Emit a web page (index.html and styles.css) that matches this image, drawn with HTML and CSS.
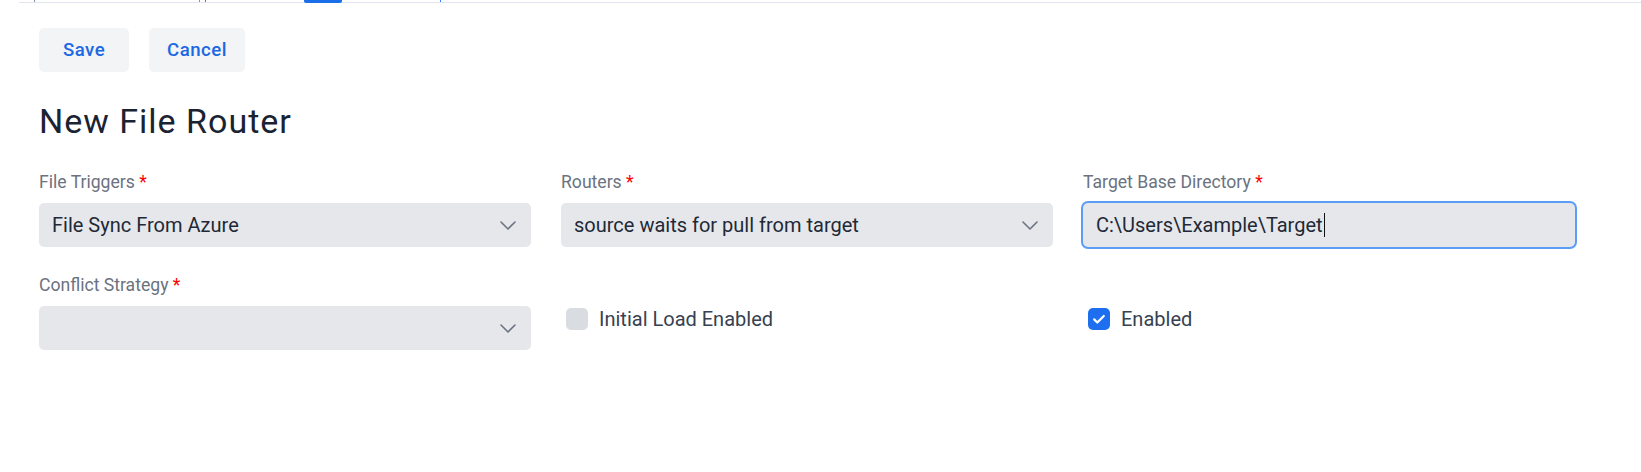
FILE: index.html
```html
<!DOCTYPE html>
<html lang="en">
<head>
    <meta charset="UTF-8">
    <meta name="viewport" content="width=device-width, initial-scale=1.0">
    <title>New File Router</title>
    <link rel="stylesheet" href="styles.css">
</head>
<body>

    <div class="tabstrip">
        <div class="tab"></div>
        <div class="tab tab-active"><span class="tab-ink"></span></div>
    </div>

    <div class="page">
        <div class="actions">
            <button type="button" class="btn">Save</button>
            <button type="button" class="btn">Cancel</button>
        </div>

        <h1 class="title">New File Router</h1>

        <form class="form-grid">
            <div class="field">
                <label class="field-label">File Triggers <span class="req">*</span></label>
                <div class="select">
                    <span>File Sync From Azure</span>
                    <svg class="chevron" width="16" height="9" viewBox="0 0 16 9"><path d="M1 1l7 7 7-7" fill="none" stroke="#6b7280" stroke-width="1.6" stroke-linecap="round" stroke-linejoin="round"/></svg>
                </div>
            </div>

            <div class="field">
                <label class="field-label">Routers <span class="req">*</span></label>
                <div class="select">
                    <span>source waits for pull from target</span>
                    <svg class="chevron" width="16" height="9" viewBox="0 0 16 9"><path d="M1 1l7 7 7-7" fill="none" stroke="#6b7280" stroke-width="1.6" stroke-linecap="round" stroke-linejoin="round"/></svg>
                </div>
            </div>

            <div class="field">
                <label class="field-label">Target Base Directory <span class="req">*</span></label>
                <div class="input input-focus">
                    <span>C:\Users\Example\Target</span><span class="caret"></span>
                </div>
            </div>

            <div class="field">
                <label class="field-label">Conflict Strategy <span class="req">*</span></label>
                <div class="select">
                    <span></span>
                    <svg class="chevron" width="16" height="9" viewBox="0 0 16 9"><path d="M1 1l7 7 7-7" fill="none" stroke="#6b7280" stroke-width="1.6" stroke-linecap="round" stroke-linejoin="round"/></svg>
                </div>
            </div>

            <div class="check-field">
                <label class="check">
                    <span class="box"></span>
                    Initial Load Enabled
                </label>
            </div>

            <div class="check-field">
                <label class="check">
                    <span class="box box-on">
                        <svg width="16" height="16" viewBox="0 0 16 16"><path d="M3.2 8.4l3.1 3.1L12.8 5" fill="none" stroke="#fff" stroke-width="2.2" stroke-linecap="round" stroke-linejoin="round"/></svg>
                    </span>
                    Enabled
                </label>
            </div>
        </form>
    </div>

</body>
</html>
```

FILE: styles.css
```css
body {
    margin: 0;
    font-family: Roboto, "Liberation Sans", Arial, sans-serif;
    background-color: #fff;
    color: #1f2937;
}

/* remnant of the tab bar above */
.tabstrip {
    display: flex;
    height: 2px;
    margin-left: 19px;
    border-bottom: 1px solid #e2e5ef;
}

.tab {
    width: 164px;
    margin-left: 15px;
    border-left: 1px solid #8a93a3;
    border-right: 1px solid #8a93a3;
}

.tab-active {
    width: 234px;
    margin-left: 5px;
    border-left-color: #3b82f6;
    border-right-color: #3b82f6;
    display: flex;
}

.tab-ink {
    width: 38px;
    height: 3px;
    margin-left: 98px;
    background-color: #1a6fe8;
    border-radius: 0 0 2px 2px;
}

.page {
    padding-left: 39px;
}

.actions {
    display: flex;
    gap: 20px;
    margin-top: 25px;
}

.btn {
    min-width: 90px;
    height: 44px;
    padding: 0 18px;
    border: none;
    border-radius: 5px;
    background-color: #f3f4f6;
    color: #1b68e4;
    font-family: Roboto, sans-serif;
    font-size: 18.6px;
    font-weight: 500;
    letter-spacing: 0.5px;
    cursor: pointer;
}

.title {
    margin: 29px 0 28px;
    font-size: 34px;
    line-height: 40px;
    font-weight: 400;
    letter-spacing: 1px;
    color: #1a2332;
}

.form-grid {
    display: grid;
    grid-template-columns: repeat(3, 492px);
    column-gap: 30px;
    row-gap: 25px;
}

.field-label {
    display: block;
    font-size: 17.6px;
    line-height: 26px;
    color: #6b7280;
    margin-bottom: 8px;
}

.req {
    color: #ff0000;
}

.select,
.input {
    display: flex;
    align-items: center;
    justify-content: space-between;
    height: 44px;
    padding: 0 15px 0 13px;
    background-color: #e5e7eb;
    border-radius: 5px;
    font-size: 20px;
    color: #1f2937;
    box-sizing: border-box;
}

.input {
    justify-content: flex-start;
}

.input-focus {
    box-shadow: 0 0 0 2px #5b9cf6;
}

.caret {
    display: inline-block;
    width: 1px;
    height: 24px;
    margin-left: 1px;
    background-color: #111;
}

.chevron {
    flex-shrink: 0;
}

.check-field {
    padding: 36px 0 0 5px;
}

.check {
    display: flex;
    align-items: center;
    gap: 11px;
    font-size: 20px;
    line-height: 22px;
    color: #374151;
}

.box {
    display: flex;
    align-items: center;
    justify-content: center;
    width: 22px;
    height: 22px;
    border-radius: 5px;
    background-color: #d9dce1;
}

.box-on {
    background-color: #1d6ff0;
}
```
